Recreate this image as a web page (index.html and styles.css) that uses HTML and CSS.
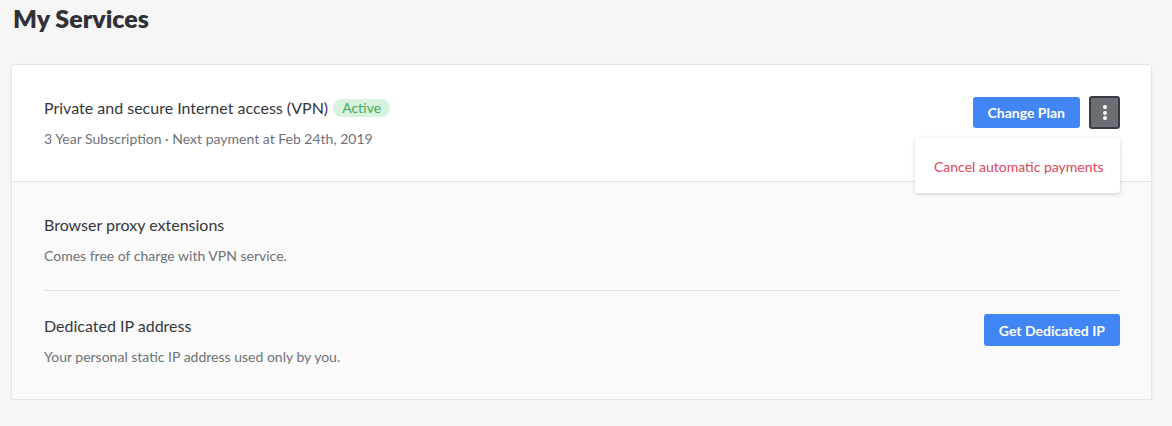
FILE: index.html
```html
<!DOCTYPE html>
<html>
<head>
<meta charset="utf-8">
<link rel="stylesheet" href="styles.css">
</head>
<body>
<h1 class="page-title">My Services</h1>
<div class="card">
  <div class="section section-top">
    <div class="info">
      <div class="name">Private and secure Internet access (VPN) <span class="badge">Active</span></div>
      <div class="desc">3 Year Subscription · Next payment at Feb 24th, 2019</div>
    </div>
    <div class="actions">
      <button class="btn">Change Plan</button>
      <div class="menu-wrap">
        <button class="kebab"><span></span><span></span><span></span></button>
        <div class="dropdown">Cancel automatic payments</div>
      </div>
    </div>
  </div>
  <div class="lower">
    <div class="section row">
      <div class="info">
        <div class="name">Browser proxy extensions</div>
        <div class="desc">Comes free of charge with VPN service.</div>
      </div>
    </div>
    <div class="section row">
      <div class="info">
        <div class="name">Dedicated IP address</div>
        <div class="desc">Your personal static IP address used only by you.</div>
      </div>
      <div class="actions">
        <button class="btn btn-tall">Get Dedicated IP</button>
      </div>
    </div>
  </div>
</div>
</body>
</html>
```

FILE: styles.css
```css
* { box-sizing: border-box; }
body {
  margin: 0;
  padding: 4px 11px 0 11px;
  background: #f6f6f6;
  font-family: Lato, "Open Sans", sans-serif;
  color: #35373d;
}
.page-title {
  margin: 0 0 0 2px;
  font-size: 25px;
  font-weight: 800;
  line-height: 28px;
  color: #2f3136;
}
.card {
  margin-top: 32px;
  background: #fafafa;
  border: 1px solid #e6e6e6;
  border-radius: 3px;
  box-shadow: 0 1px 2px rgba(0,0,0,0.08);
  width: 1141px;
}
.section {
  display: flex;
  justify-content: space-between;
  align-items: flex-start;
}
.section-top {
  background: #fff;
  padding: 33px 31px 33px 32px;
  border-bottom: 1px solid #e4e4e4;
  border-radius: 3px 3px 0 0;
}
.lower { padding: 0 31px 0 32px; }
.row { padding: 33px 0 25px; }
.row + .row {
  border-top: 1px solid #e4e4e4;
  padding-top: 25px;
  padding-bottom: 33px;
}
.name {
  font-size: 16px;
  line-height: 20px;
  color: #35373d;
  display: flex;
  align-items: center;
  gap: 5px;
}
.badge {
  background: #d9f2df;
  color: #3dae55;
  font-size: 14px;
  line-height: 18px;
  padding: 0 9px;
  border-radius: 9px;
}
.desc {
  margin-top: 12px;
  font-size: 14px;
  line-height: 18px;
  color: #6f7177;
}
.actions {
  display: flex;
  align-items: flex-start;
  gap: 9px;
  margin-top: -2px;
}
.btn {
  background: #4285f4;
  color: #fff;
  border: none;
  border-radius: 3px;
  font-family: inherit;
  font-weight: 700;
  font-size: 14px;
  height: 31px;
  padding: 0 15px;
  cursor: pointer;
}
.btn-tall { height: 32px; }
.section-top .btn { margin-top: 1px; }
.menu-wrap { position: relative; }
.kebab {
  width: 31px;
  height: 33px;
  background: #6c6e75;
  border: 2px solid #3a3c41;
  border-radius: 3px;
  display: flex;
  flex-direction: column;
  align-items: center;
  justify-content: center;
  gap: 1.5px;
  padding: 0;
}
.kebab span {
  width: 4px;
  height: 4px;
  border-radius: 50%;
  background: #fff;
}
.dropdown {
  position: absolute;
  right: 0;
  top: 42px;
  width: 205px;
  height: 55px;
  background: #fff;
  border-radius: 3px;
  box-shadow: 0 1px 4px rgba(0,0,0,0.18);
  color: #e0455a;
  font-size: 14px;
  line-height: 57px;
  padding-left: 19px;
  white-space: nowrap;
}
```
